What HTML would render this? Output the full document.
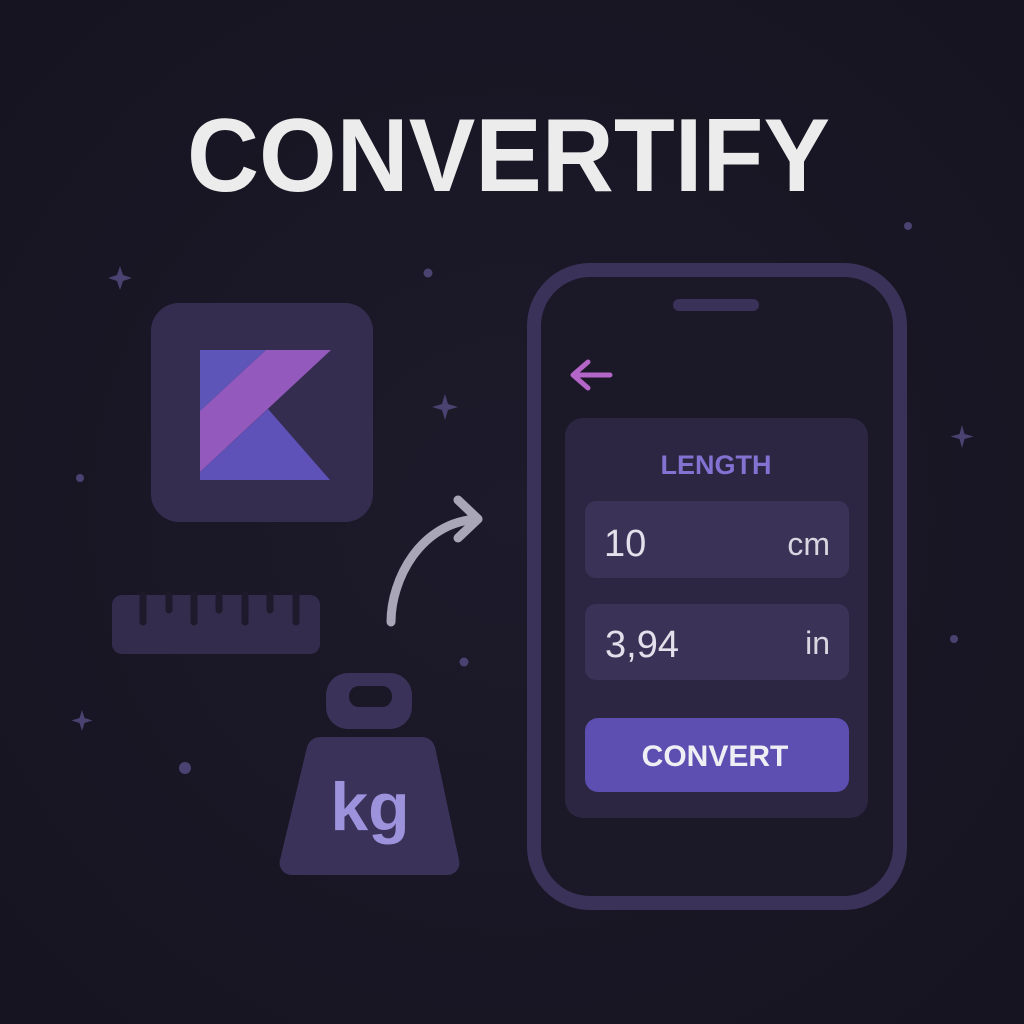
<!DOCTYPE html>
<html><head><meta charset="utf-8"><style>
html,body{margin:0;padding:0;background:#1a1726;}
svg{display:block}
</style></head><body>
<svg width="1024" height="1024" viewBox="0 0 1024 1024" xmlns="http://www.w3.org/2000/svg">
<defs>
<radialGradient id="bg" cx="50%" cy="50%" r="70%"><stop offset="0" stop-color="#1d1a2b"/><stop offset="1" stop-color="#161420"/></radialGradient>
</defs>
<rect width="1024" height="1024" fill="url(#bg)"/>
<text x="187" y="191" font-family="Liberation Sans, sans-serif" font-weight="bold" font-size="104" fill="#ececec" textLength="643" lengthAdjust="spacingAndGlyphs">CONVERTIFY</text>

<g fill="#4a4270">
<path d="M120 266 l3 9 l9 3 l-9 3 l-3 9 l-3 -9 l-9 -3 l9 -3z"/>
<path d="M445 394 l3 10 l10 3 l-10 3 l-3 10 l-3 -10 l-10 -3 l10 -3z"/>
<path d="M962 425 l2.5 9 l9 2.5 l-9 2.5 l-2.5 9 l-2.5 -9 l-9 -2.5 l9 -2.5z"/>
<path d="M82 710 l2.5 8 l8 2.5 l-8 2.5 l-2.5 8 l-2.5 -8 l-8 -2.5 l8 -2.5z"/>
<circle cx="428" cy="273" r="4.5"/><circle cx="908" cy="226" r="4"/><circle cx="80" cy="478" r="4"/>
<circle cx="464" cy="662" r="4.5"/><circle cx="185" cy="768" r="6"/><circle cx="954" cy="639" r="4"/>
</g>

<!-- kotlin tile -->
<rect x="151" y="303" width="222" height="219" rx="28" fill="#342d50"/>
<polygon points="200,350 266,350 200,411" fill="#5d55b8"/>
<polygon points="266,350 331,350 200,472 200,411" fill="#9459bd"/>
<polygon points="268,409 330,480 200,480 200,472" fill="#5e52b8"/>

<!-- ruler -->
<rect x="112" y="595" width="208" height="59" rx="10" fill="#332c4c"/>
<g stroke="#1e1a2c" stroke-width="7" stroke-linecap="round">
<line x1="143" y1="595" x2="143" y2="622"/><line x1="169" y1="595" x2="169" y2="610"/>
<line x1="194" y1="595" x2="194" y2="622"/><line x1="219" y1="595" x2="219" y2="610"/>
<line x1="245" y1="595" x2="245" y2="622"/><line x1="270" y1="595" x2="270" y2="610"/>
<line x1="296" y1="595" x2="296" y2="622"/>
</g>

<g fill="none" stroke="#a9a6b8" stroke-width="9" stroke-linecap="round" stroke-linejoin="round">
<path d="M391 622 C391 580 420 522 478 519"/>
<path d="M458 500 L478 519 L458 538"/>
</g>

<!-- weight -->
<path d="M348 673 h42 a22 22 0 0 1 22 22 v12 a22 22 0 0 1 -20 22 h-46 a22 22 0 0 1 -20 -22 v-12 a22 22 0 0 1 22 -22z" fill="#3a3259"/>
<rect x="349" y="686" width="43" height="21" rx="10" fill="#1a1726"/>
<path d="M320 737 h102 a14 14 0 0 1 13 10 l24 113 a12 12 0 0 1 -12 15 h-155 a12 12 0 0 1 -12 -15 l27 -113 a14 14 0 0 1 13 -10z" fill="#3a3259"/>
<text x="370" y="830" text-anchor="middle" font-family="Liberation Sans, sans-serif" font-weight="bold" font-size="68" fill="#9c93dc">kg</text>

<!-- phone -->
<rect x="534" y="270" width="366" height="633" rx="56" fill="#1b1828" stroke="#3a3258" stroke-width="14"/>
<rect x="673" y="299" width="86" height="12" rx="6" fill="#3a3258"/>
<g fill="none" stroke="#b465c8" stroke-width="5" stroke-linecap="round" stroke-linejoin="round">
<path d="M610 375 H573 M588 362 L573 375 L588 388"/>
</g>
<rect x="565" y="418" width="303" height="400" rx="18" fill="#2c2642"/>
<text x="716" y="474" text-anchor="middle" font-family="Liberation Sans, sans-serif" font-weight="bold" font-size="27" fill="#8272d2">LENGTH</text>
<rect x="585" y="501" width="264" height="77" rx="11" fill="#3a3357"/>
<text x="604" y="556" font-family="Liberation Sans, sans-serif" font-size="38" fill="#e2e0ea">10</text>
<text x="830" y="555" text-anchor="end" font-family="Liberation Sans, sans-serif" font-size="32" fill="#d8d6e0">cm</text>
<rect x="585" y="604" width="264" height="76" rx="11" fill="#3a3357"/>
<text x="605" y="657" font-family="Liberation Sans, sans-serif" font-size="38" fill="#e2e0ea">3,94</text>
<text x="830" y="654" text-anchor="end" font-family="Liberation Sans, sans-serif" font-size="32" fill="#d8d6e0">in</text>
<rect x="585" y="718" width="264" height="74" rx="13" fill="#5d4eb1"/>
<text x="715" y="766" text-anchor="middle" font-family="Liberation Sans, sans-serif" font-weight="bold" font-size="30" fill="#eeeef4">CONVERT</text>
</svg>
</body></html>
